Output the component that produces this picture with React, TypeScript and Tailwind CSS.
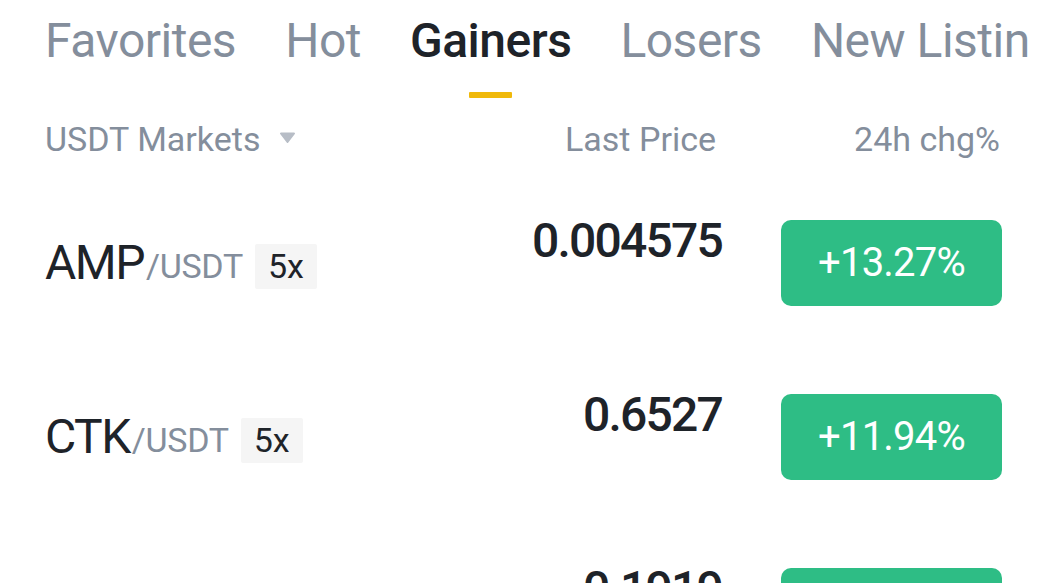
const tabs = ['Favorites', 'Hot', 'Gainers', 'Losers', 'New Listing'];

const rows = [
    { base: 'AMP', price: '0.004575', chg: '+13.27%' },
    { base: 'CTK', price: '0.6527', chg: '+11.94%' },
    { base: 'XVS', price: '0.1919', chg: '+10.12%' },
];

export default function App() {
    return (
        <div className="w-[1046px] h-[583px] overflow-hidden bg-white text-[#1e2329] font-['Roboto',sans-serif]">

            {/* Tabs */}
            <div className="w-[1030px] overflow-hidden">
                <div className="flex items-start gap-[49px] pl-[45px] pt-[17px] whitespace-nowrap">
                    {tabs.map((t) => (
                        <div key={t} className="flex flex-col items-center shrink-0">
                            <span
                                className={`text-[48px] leading-none tracking-[-0.5px] ${t === 'Gainers' ? 'text-[#1e2329] font-medium' : 'text-[#848e9c]'}`}
                            >
                                {t}
                            </span>
                            <div className={`mt-[27px] w-[43px] h-[6px] rounded-[1px] ${t === 'Gainers' ? 'bg-[#f0b90b]' : 'bg-transparent'}`} />
                        </div>
                    ))}
                </div>
            </div>

            {/* Column headers */}
            <div className="flex items-start pl-[45px] pr-[46px] pt-[24px] text-[34px] leading-none text-[#848e9c]">
                <div className="flex-1 flex items-center gap-[19px]">
                    <span>USDT Markets</span>
                    <svg width="17" height="13" viewBox="0 0 17 13" className="mt-[-4px]">
                        <path d="M2 1.5h13a1 1 0 0 1 .8 1.6l-6.5 8.4a1 1 0 0 1-1.6 0L1.2 3.1A1 1 0 0 1 2 1.5z" fill="#b7bdc6" />
                    </svg>
                </div>
                <span className="w-[200px] text-right">Last Price</span>
                <span className="w-[284px] text-right">24h chg%</span>
            </div>

            {/* Rows */}
            <div className="flex flex-col pl-[45px] pr-[44px] pt-[64px]">
                {rows.map((r) => (
                    <div key={r.base} className="flex items-start h-[174px] shrink-0">
                        <div className="flex-1 flex items-center h-[86px]">
                            <span className="text-[48px] leading-none tracking-[-1.5px]">{r.base}</span>
                            <span className="ml-[2px] text-[34px] leading-none tracking-[-0.3px] text-[#848e9c] mt-[6px]">/USDT</span>
                            <span className="ml-[12px] mt-[6px] px-[13px] h-[45px] flex items-center bg-[#f5f5f5] rounded-[2px] text-[34px] leading-none">5x</span>
                        </div>
                        <span className="text-[48px] leading-none font-medium tracking-[-1.8px] mt-[-3px]">{r.price}</span>
                        <div className="ml-[59px] w-[221px] h-[86px] rounded-[10px] bg-[#2ebd85] flex items-center justify-center text-white text-[40px] leading-none tracking-[-0.8px]">
                            {r.chg}
                        </div>
                    </div>
                ))}
            </div>
        </div>
    );
}
